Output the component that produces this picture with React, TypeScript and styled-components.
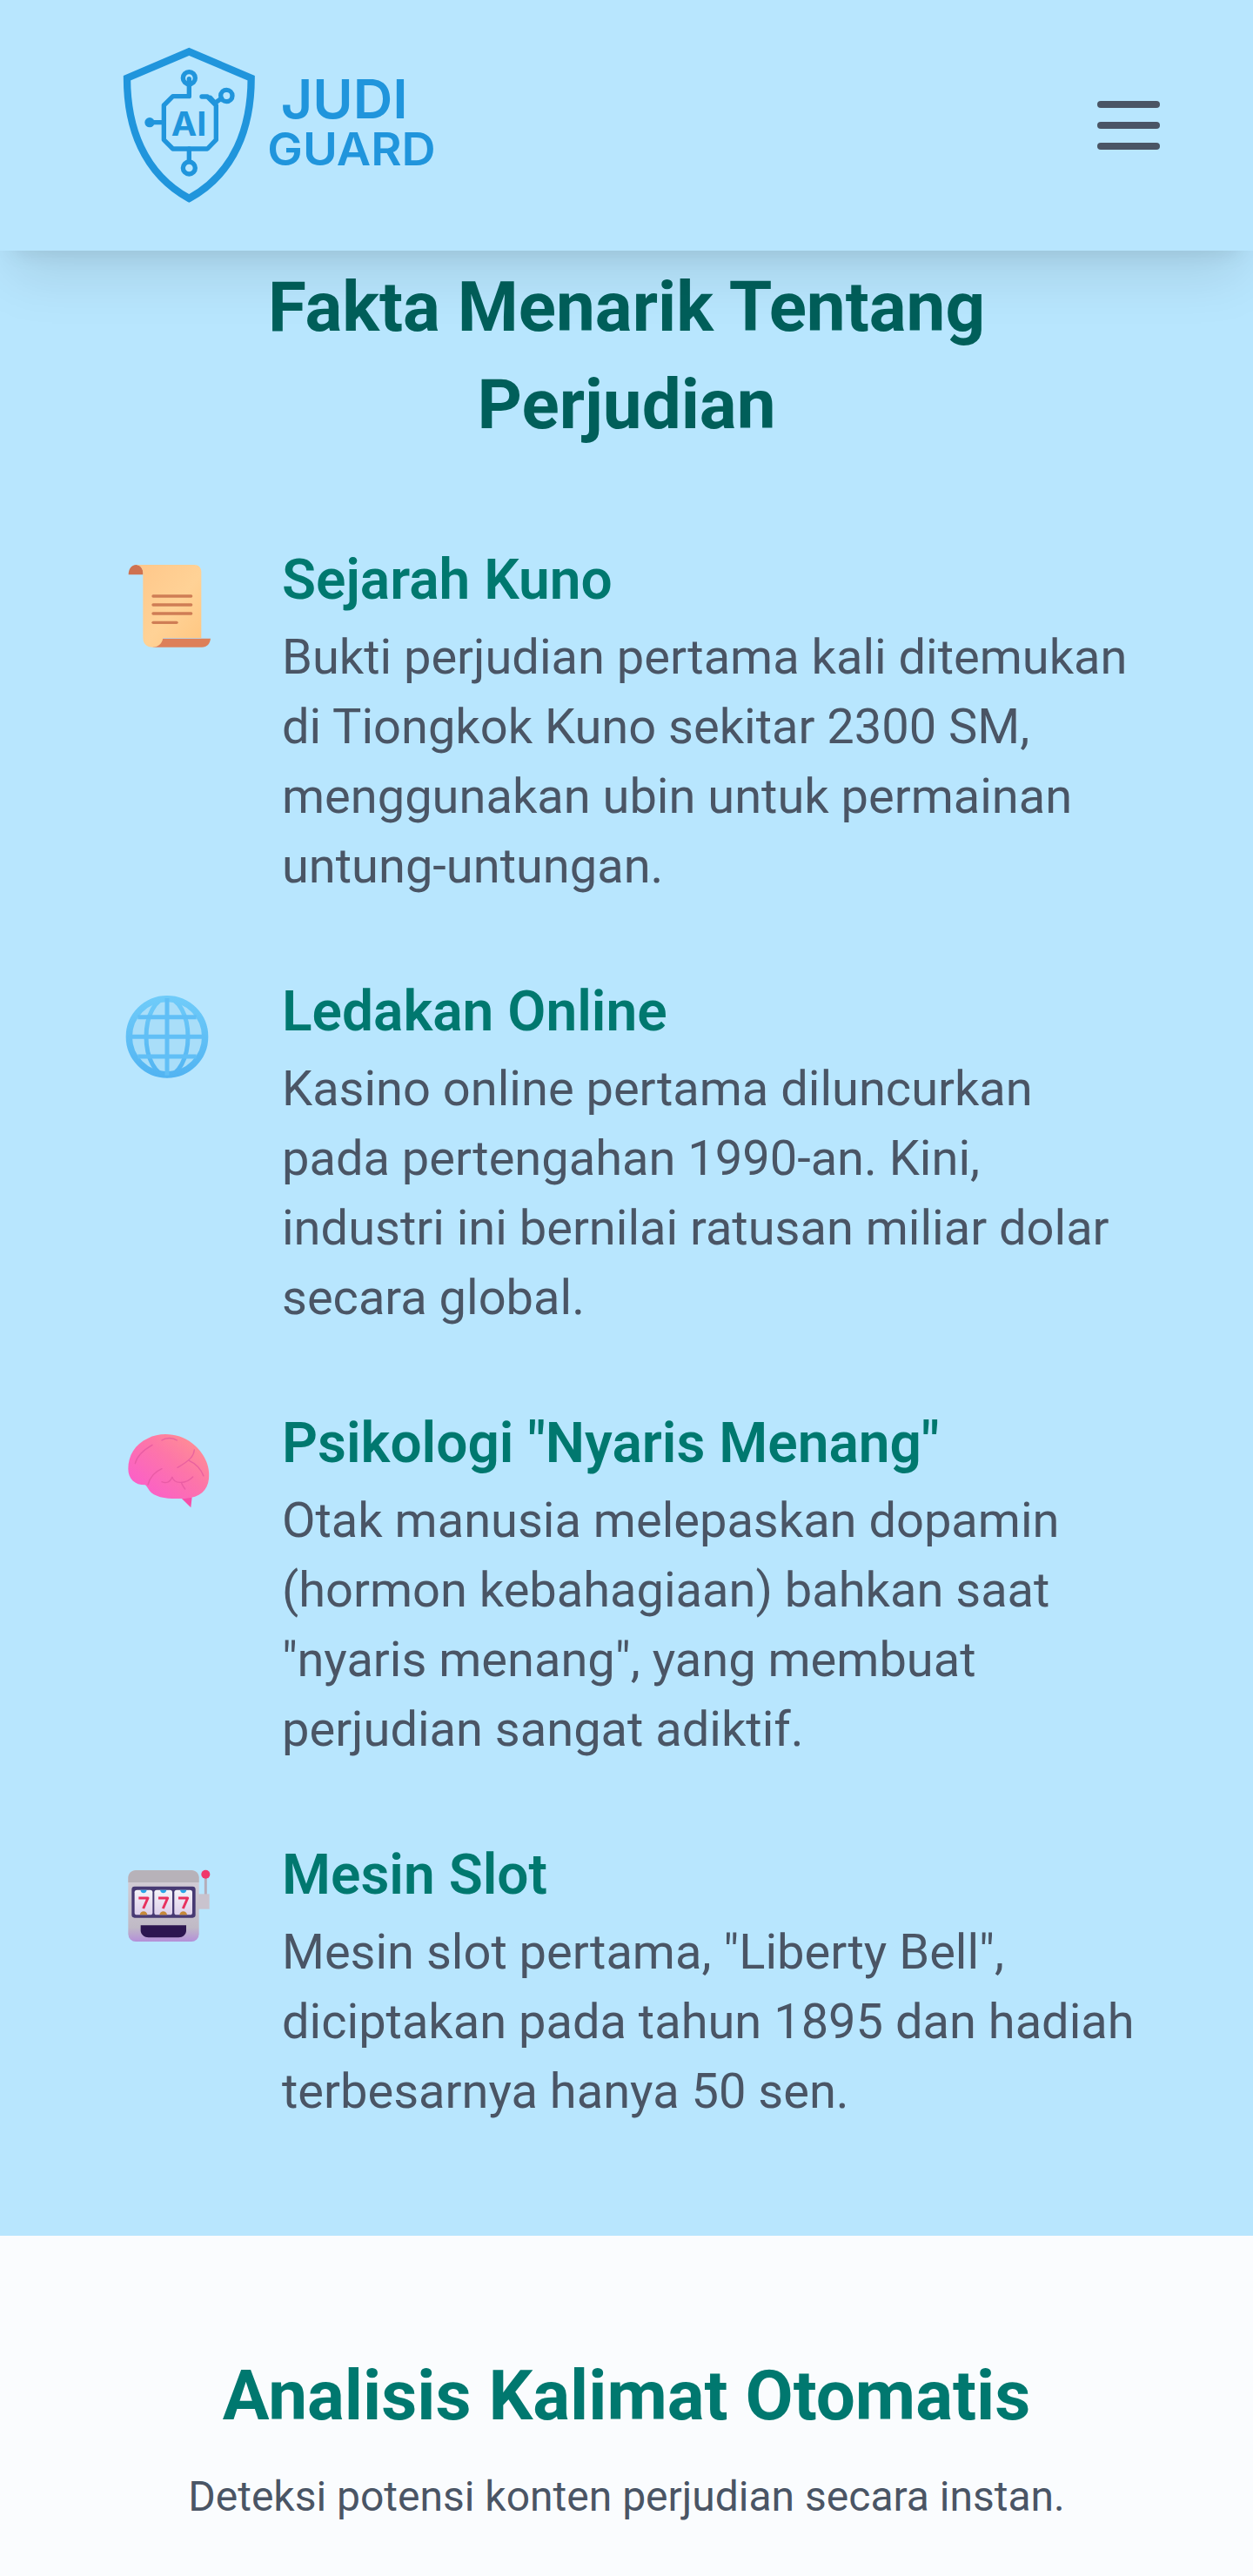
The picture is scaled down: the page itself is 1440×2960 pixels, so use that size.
import React from "react";
import styled, { createGlobalStyle } from "styled-components";

const GlobalStyle = createGlobalStyle`
  html, body {
    margin: 0;
    padding: 0;
    background: #fafcfe;
    font-family: Roboto, "Liberation Sans", sans-serif;
  }
`;

const LOGO_BLUE = "#2095dc";

const Logo = () => (
  <LogoSvg viewBox="0 0 1350 690" role="img" aria-label="Judi Guard">
    <g fill="none" stroke={LOGO_BLUE} strokeLinejoin="round" strokeLinecap="round">
      <path strokeWidth="25" strokeLinejoin="miter" d="M352 91 L566 182 C566 350 510 510 352 597 C194 510 138 350 138 182 Z" />
      <g strokeWidth="16">
        <path d="M352 185 V245 H296 L265 276 V395 L296 426 H415 L445 395 V276 L415 246 H396" />
        <path d="M352 426 V468" />
        <path d="M265 335 H232" />
        <path d="M425 250 L441 268 L464 252" />
        <circle cx="352" cy="182" r="21" />
        <circle cx="352" cy="492" r="21" />
        <circle cx="481" cy="243" r="20" />
      </g>
    </g>
    <circle cx="216" cy="335" r="17" fill={LOGO_BLUE} />
    <LogoText x="290" y="381" fontSize="114" fontWeight="700" textLength="122" lengthAdjust="spacingAndGlyphs">
      AI
    </LogoText>
    <LogoText>
      <tspan x="668" y="320" fontSize="186" fontWeight="600" textLength="438" lengthAdjust="spacingAndGlyphs">
        JUDI
      </tspan>
      <tspan x="622" y="482" fontSize="156" fontWeight="600" textLength="580" lengthAdjust="spacingAndGlyphs">
        GUARD
      </tspan>
    </LogoText>
  </LogoSvg>
);

const ScrollIcon = () => (
  <IconSvg viewBox="0 0 390 390" aria-hidden="true">
    <defs>
      <linearGradient id="scrollBody" x1="0" y1="0" x2="1" y2="1">
        <stop offset="0" stopColor="#ffc78a" />
        <stop offset="0.55" stopColor="#ffd296" />
        <stop offset="1" stopColor="#ffc680" />
      </linearGradient>
    </defs>
    <path d="M80 54 C62 54 53 70 53 88 H104 C104 70 96 54 80 54 Z" fill="#cf7250" />
    <path d="M160 308 H336 C334 325 324 338 306 338 H136 Z" fill="#dd8059" />
    <path d="M80 54 H280 C295 54 304 64 304 78 V306 H172 C170 325 155 338 135 338 C116 338 103 326 103 306 V82 C103 68 95 56 80 54 Z" fill="url(#scrollBody)" />
    <g stroke="#cf7d55" strokeWidth="10" strokeLinecap="round">
      <path d="M138 162 H269" />
      <path d="M138 192 H269" />
      <path d="M138 222 H269" />
      <path d="M138 253 H219" />
    </g>
  </IconSvg>
);

const GlobeIcon = () => (
  <IconSvg viewBox="0 -12 390 390" aria-hidden="true">
    <defs>
      <linearGradient id="globeRim" x1="0.5" y1="0" x2="0.5" y2="1">
        <stop offset="0" stopColor="#6fcbf9" />
        <stop offset="1" stopColor="#52b4f2" />
      </linearGradient>
    </defs>
    <circle cx="186" cy="181" r="133" fill="#a9def9" />
    <g fill="none" stroke="url(#globeRim)" strokeWidth="15">
      <circle cx="186" cy="181" r="131" strokeWidth="22" />
      <ellipse cx="186" cy="181" rx="72" ry="133" />
    </g>
    <g fill="none" stroke="#61bff6" strokeWidth="15">
      <path d="M186 48 V314" />
      <path d="M53 181 H319" />
      <path d="M85 113 H287" />
      <path d="M85 249 H287" />
    </g>
  </IconSvg>
);

const BrainIcon = () => (
  <IconSvg viewBox="0 -24 390 390" aria-hidden="true">
    <defs>
      <linearGradient id="brainFill" x1="0.1" y1="0.8" x2="0.8" y2="0.1">
        <stop offset="0" stopColor="#fb5fc8" />
        <stop offset="0.6" stopColor="#fd76a8" />
        <stop offset="1" stopColor="#ff8c96" />
      </linearGradient>
    </defs>
    <path d="M236 272 L272 268 L268 304 Z" fill="#f74fa9" />
    <path d="M52 170 C52 125 75 85 120 65 C165 42 230 48 272 82 C312 112 336 160 330 205 C326 245 298 270 250 272 C200 276 145 272 125 245 C118 235 115 228 110 226 C75 226 52 205 52 170 Z" fill="url(#brainFill)" />
    <g fill="none" stroke="#e2569f" strokeWidth="4" strokeLinecap="round" opacity="0.7">
      <path d="M168 72 C182 62 205 62 220 72" />
      <path d="M135 88 C105 105 82 125 76 152" />
      <path d="M280 105 C278 125 268 140 222 166" />
      <path d="M262 142 C280 150 300 165 312 195" />
      <path d="M168 170 C145 180 128 195 120 225" />
      <path d="M168 215 C185 222 198 215 204 198 C208 222 250 225 275 198" />
      <path d="M236 220 C240 228 243 234 248 240" />
    </g>
  </IconSvg>
);

const SlotIcon = () => (
  <IconSvg viewBox="0 -36 390 390" aria-hidden="true">
    <defs>
      <linearGradient id="slotBase" x1="0" y1="0" x2="0" y2="1">
        <stop offset="0" stopColor="#d6d0d8" />
        <stop offset="0.8" stopColor="#c0bac6" />
        <stop offset="1" stopColor="#b48fd8" />
      </linearGradient>
      <linearGradient id="reel" x1="0" y1="0" x2="0" y2="1">
        <stop offset="0" stopColor="#f6f3f8" />
        <stop offset="1" stopColor="#dccfea" />
      </linearGradient>
    </defs>
    <path d="M319 80 V140" stroke="#b5adba" strokeWidth="9" />
    <path d="M292 136 H332 V188 H292 Z" fill="#c9c3ce" />
    <circle cx="319" cy="68" r="15" fill="#f0386b" />
    <rect x="52" y="54" width="244" height="246" rx="26" fill="url(#slotBase)" />
    <path d="M52 96 V80 C52 65 64 54 78 54 H270 C285 54 296 65 296 80 V96 Z" fill="#b7b2b9" />
    <rect x="64" y="110" width="220" height="108" rx="10" fill="#473a73" />
    {[74, 142, 211].map((x) => (
      <g key={x}>
        <rect x={x} y="122" width="62" height="86" rx="8" fill="url(#reel)" />
        <path d={`M${x + 20} 122 H${x + 42} C${x + 40} 136 ${x + 22} 136 ${x + 20} 122 Z`} fill="#2aa5e8" />
        <path d={`M${x + 18} 208 C${x + 20} 192 ${x + 42} 192 ${x + 44} 208 Z`} fill="#c78a3a" />
        <path d={`M${x + 14} 150 H${x + 46} L${x + 30} 186`} fill="none" stroke="#e8315f" strokeWidth="9" strokeLinejoin="round" />
      </g>
    ))}
    <path d="M95 244 H252 V262 C252 276 240 286 226 286 H122 C108 286 95 276 95 262 Z" fill="#2d1650" />
  </IconSvg>
);

const facts = [
  {
    title: "Sejarah Kuno",
    body: "Bukti perjudian pertama kali ditemukan di Tiongkok Kuno sekitar 2300 SM, menggunakan ubin untuk permainan untung-untungan.",
    icon: <ScrollIcon />,
  },
  {
    title: "Ledakan Online",
    body: "Kasino online pertama diluncurkan pada pertengahan 1990-an. Kini, industri ini bernilai ratusan miliar dolar secara global.",
    icon: <GlobeIcon />,
  },
  {
    title: 'Psikologi "Nyaris Menang"',
    body: 'Otak manusia melepaskan dopamin (hormon kebahagiaan) bahkan saat "nyaris menang", yang membuat perjudian sangat adiktif.',
    icon: <BrainIcon />,
  },
  {
    title: "Mesin Slot",
    body: 'Mesin slot pertama, "Liberty Bell", diciptakan pada tahun 1895 dan hadiah terbesarnya hanya 50 sen.',
    icon: <SlotIcon />,
  },
];

export default function App() {
  return (
    <Page>
      <GlobalStyle />
      <Header>
        <Logo />
        <MenuButton aria-label="Menu">
          <MenuLine />
          <MenuLine />
          <MenuLine />
        </MenuButton>
      </Header>
      <FactsSection>
        <FactsTitle>Fakta Menarik Tentang Perjudian</FactsTitle>
        <FactList>
          {facts.map((fact) => (
            <FactItem key={fact.title}>
              <FactIcon>{fact.icon}</FactIcon>
              <div>
                <FactTitle>{fact.title}</FactTitle>
                <FactBody>{fact.body}</FactBody>
              </div>
            </FactItem>
          ))}
        </FactList>
      </FactsSection>
      <AnalysisSection>
        <AnalysisTitle>Analisis Kalimat Otomatis</AnalysisTitle>
        <AnalysisText>Deteksi potensi konten perjudian secara instan.</AnalysisText>
      </AnalysisSection>
    </Page>
  );
}

const Page = styled.div`
  width: 1440px;
  min-height: 2960px;
  background: #fafcfe;
  overflow: hidden;
`;

const Header = styled.header`
  position: relative;
  z-index: 2;
  height: 288px;
  padding: 0 95px 0 100px;
  box-sizing: border-box;
  display: flex;
  align-items: center;
  justify-content: space-between;
  background: #b8e6fe;
  box-shadow: 0 40px 60px -12px rgba(0, 0, 0, 0.1), 0 16px 24px -16px rgba(0, 0, 0, 0.1);
`;

const LogoSvg = styled.svg`
  width: 450px;
  height: 230px;
  display: block;
`;

const LogoText = styled.text`
  font-family: Inter, "Liberation Sans", sans-serif;
  fill: #2095dc;
`;

const MenuButton = styled.button`
  width: 96px;
  height: 96px;
  padding: 0 12px;
  box-sizing: border-box;
  border: 0;
  background: none;
  display: flex;
  flex-direction: column;
  justify-content: center;
  gap: 16px;
`;

const MenuLine = styled.span`
  display: block;
  height: 8px;
  border-radius: 4px;
  background: #4a5565;
`;

const FactsSection = styled.section`
  background: #b8e6fe;
  padding: 9px 128px 126px;
`;

const FactsTitle = styled.h2`
  margin: 0 auto 98px;
  width: 900px;
  font-size: 80px;
  line-height: 112px;
  font-weight: 700;
  text-align: center;
  color: #005f5a;
`;

const FactList = styled.div`
  display: flex;
  flex-direction: column;
  gap: 80px;
`;

const FactItem = styled.article`
  display: flex;
  gap: 64px;
  align-items: flex-start;
`;

const FactIcon = styled.div`
  flex: none;
  width: 130px;
  height: 130px;
  margin: 12px 0 0 2px;
`;

const IconSvg = styled.svg`
  width: 130px;
  height: 130px;
  display: block;
  overflow: visible;
`;

const FactTitle = styled.h3`
  margin: 0;
  font-size: 64px;
  line-height: 96px;
  font-weight: 600;
  color: #00786f;
`;

const FactBody = styled.p`
  margin: 0;
  font-size: 56px;
  line-height: 80px;
  color: #4a5565;
`;

const AnalysisSection = styled.section`
  padding: 128px 128px 0;
  text-align: center;
  background: #fafcfe;
`;

const AnalysisTitle = styled.h2`
  margin: 0 0 20px;
  font-size: 80px;
  line-height: 112px;
  font-weight: 700;
  color: #00786f;
`;

const AnalysisText = styled.p`
  margin: 0;
  font-size: 48px;
  line-height: 80px;
  color: #4a5565;
`;
